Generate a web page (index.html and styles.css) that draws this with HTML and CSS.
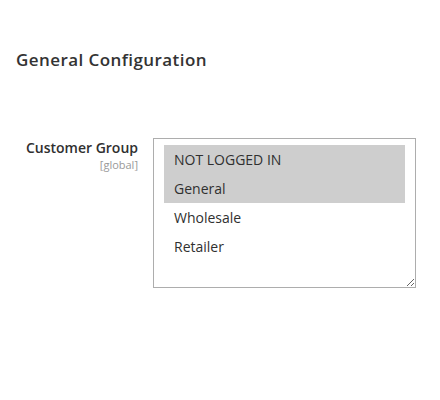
FILE: index.html
```html
<!DOCTYPE html>
<html lang="en">
<head>
    <meta charset="UTF-8">
    <meta name="viewport" content="width=device-width, initial-scale=1.0">
    <title>General Configuration</title>
    <link rel="stylesheet" href="styles.css">
</head>

<body>

    <div class="config-section">
        <h2 class="section-title">General Configuration</h2>

        <div class="field-row">
            <div class="field-label">
                <label for="customerGroup">Customer Group</label>
                <span class="scope">[global]</span>
            </div>
            <div class="field-control">
                <select id="customerGroup" name="groups[]" multiple>
                    <option value="0" selected>NOT LOGGED IN</option>
                    <option value="1" selected>General</option>
                    <option value="2">Wholesale</option>
                    <option value="3">Retailer</option>
                </select>
            </div>
        </div>
    </div>

</body>
</html>
```

FILE: styles.css
```css
* {
    margin: 0;
    padding: 0;
    box-sizing: border-box;
}

body {
    font-family: "Open Sans", Arial, sans-serif;
    background: #fff;
    color: #303030;
}

.config-section {
    padding: 48px 16px 0;
}

.section-title {
    font-size: 17px;
    font-weight: 600;
    letter-spacing: .025em;
    color: #333;
    line-height: 24px;
    margin-bottom: 66px;
}

.field-row {
    display: grid;
    grid-template-columns: 122px 262px;
    gap: 15px;
}

.field-label {
    text-align: right;
}

.field-label label {
    display: block;
    font-size: 14px;
    font-weight: 600;
    line-height: 20px;
    color: #303030;
}

.field-label .scope {
    display: block;
    font-size: 11px;
    line-height: 14px;
    color: #999;
}

.field-control select {
    width: 263px;
    height: 150px;
    padding: 6px 10px;
    border: 1px solid #adadad;
    border-radius: 0;
    font-family: "Open Sans", Arial, sans-serif;
    font-size: 14px;
    color: #303030;
    background: #fff;
    resize: both;
    overflow: auto;
    outline: none;
}

.field-control option {
    padding: 5px 10px;
}

.field-control option:checked {
    background: #cecece;
    color: #303030;
}
```
